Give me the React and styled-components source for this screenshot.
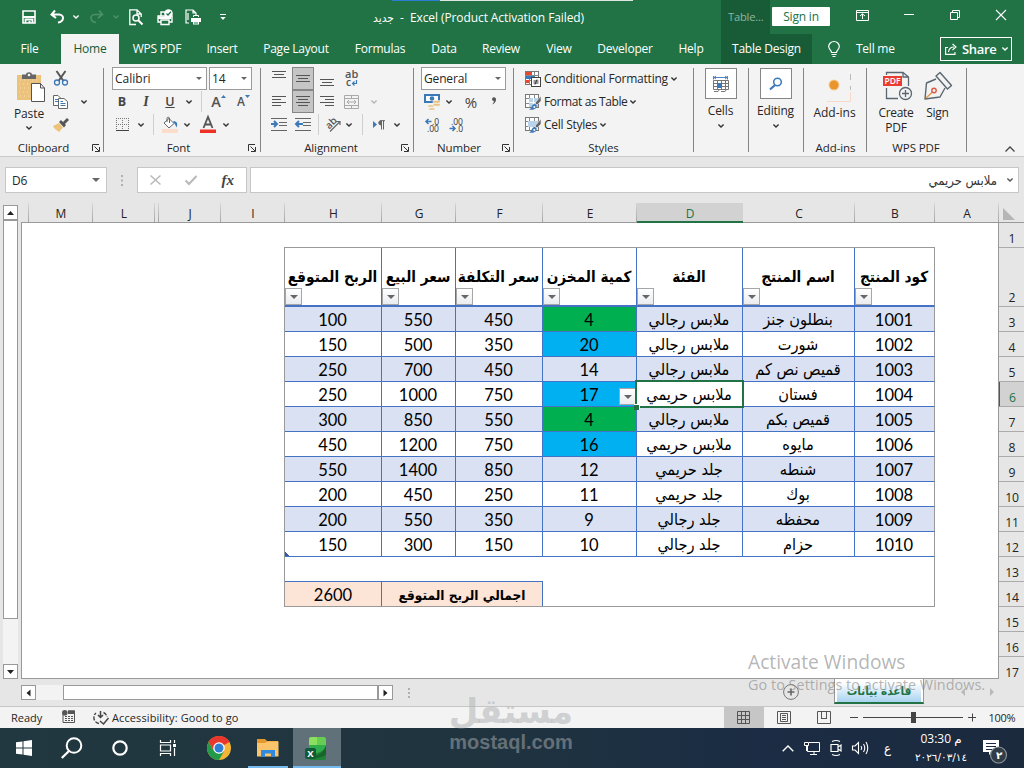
import React from 'react';
import styled, { createGlobalStyle } from 'styled-components';

const ui = "'Open Sans', 'Noto Sans', 'DejaVu Sans Condensed', 'DejaVu Sans', sans-serif";
const arabic = "'DejaVu Sans Condensed', 'DejaVu Sans', sans-serif";
const cellFont = `Lato, ${arabic}`;

const GlobalStyle = createGlobalStyle`
  * {
    box-sizing: border-box;
  }
  body {
    margin: 0;
    overflow: hidden;
  }
`;

const Window = styled.div`
  position: relative;
  display: flex;
  flex-direction: column;
  width: 1024px;
  height: 768px;
  overflow: hidden;
  background: #e6e6e6;
  font-family: ${ui};
  font-size: 12px;
  color: #262626;
  white-space: nowrap;
`;

const Svg = styled.svg`
  display: block;
  flex: none;
  overflow: visible;
`;

const Slot = styled.div`
  display: flex;
  flex: none;
  align-items: center;
  justify-content: center;
  width: ${props => props.$w}px;
  height: ${props => (props.$h ? `${props.$h}px` : 'auto')};
`;

const Text = styled.span`
  letter-spacing: ${props => props.$ls || 0}px;
  font-size: ${props => props.$size || 12}px;
  font-weight: ${props => props.$weight || 400};
  color: ${props => props.$color || 'inherit'};
`;

const SerifItalic = styled.span`
  font-family: 'Liberation Serif', serif;
  font-size: ${props => props.$size}px;
  font-style: italic;
  font-weight: ${props => props.$weight || 400};
  color: #444;
`;

/* title bar */

const TopStrip = styled.div`
  position: absolute;
  top: 0;
  left: 392px;
  width: 241px;
  height: 1px;
  background: linear-gradient(90deg, #2b7cd3 48px, #dfe5e1 48px);
`;

const TitleBar = styled.div`
  display: flex;
  flex: none;
  align-items: center;
  height: 34px;
  background: #217346;
  color: #fff;
`;

const QuickAccess = styled.div`
  display: flex;
  align-items: center;
  width: 373px;
  height: 34px;
  padding-left: 20px;
`;

const FileTitle = styled.div`
  display: flex;
  gap: 6px;
  width: 348px;
  padding-top: 1px;
`;

const ContextTitle = styled.div`
  display: flex;
  align-items: center;
  width: 49px;
  height: 34px;
  padding: 0 0 2px 7px;
  background: #185c37;
  color: #8fb49f;
`;

const SignIn = styled.div`
  display: flex;
  align-items: center;
  justify-content: center;
  width: 58px;
  height: 19px;
  margin-left: 2px;
  margin-top: -1px;
  border-radius: 1px;
  background: #fff;
  color: #217346;
`;

const TabRow = styled.div`
  display: flex;
  flex: none;
  height: 30px;
  background: #217346;
  color: #fff;
`;

const Tab = styled.div`
  display: flex;
  align-items: center;
  justify-content: center;
  width: ${props => props.$w}px;
  height: 30px;
  margin-right: ${props => props.$gap || 0}px;
  padding-bottom: 1px;
  background: ${props => props.$bg || 'transparent'};
  color: ${props => props.$color || '#fff'};
  letter-spacing: -0.22px;
`;

const TellMe = styled.div`
  display: flex;
  align-items: center;
  width: 45px;
  padding: 0 0 1px 0;
`;

const Share = styled.div`
  display: flex;
  align-items: center;
  width: 72px;
  height: 24px;
  margin: 3px 0 0 37px;
  padding: 0 4px;
  gap: 5px;
  border: 1px solid #fff;
`;

/* ribbon */

const Ribbon = styled.div`
  display: flex;
  flex: none;
  height: 93px;
  background: #f3f3f3;
  border-bottom: 1px solid #c9c9c9;
`;

const Group = styled.div`
  display: flex;
  flex: none;
  flex-direction: column;
  width: ${props => props.$w}px;
  height: 89px;
  margin-top: 3px;
  padding-left: ${props => props.$pad || 0}px;
  background: linear-gradient(#858585, #858585) right 1px / 1px 84px no-repeat;
`;

const GroupBody = styled.div`
  display: flex;
  flex: none;
  flex-direction: ${props => (props.$row ? 'row' : 'column')};
  height: 72px;
`;

const GroupFooter = styled.div`
  display: flex;
  flex: none;
  align-items: center;
  height: 17px;
`;

const GroupLabel = styled.div`
  flex: 1;
  text-align: center;
  padding-left: ${props => props.$shift || 0}px;
  font-size: 11.5px;
  letter-spacing: -0.1px;
`;

const ToolRow = styled.div`
  display: flex;
  align-items: center;
  height: 23px;
`;

const Combo = styled.div`
  display: flex;
  align-items: center;
  justify-content: space-between;
  width: ${props => props.$w}px;
  height: 23px;
  margin-right: 2px;
  padding: 0 4px 0 2px;
  border: 1px solid #9a9a9a;
  background: #fff;
`;

const Divider = styled.div`
  width: 1px;
  height: 21px;
  margin: 0 ${props => props.$r || 0}px 0 ${props => props.$l || 0}px;
  background: #cfcfcf;
`;

const Pressed = styled(Slot)`
  border: 1px solid #868686;
  background: #c5c5c5;
`;

const BigButton = styled.div`
  display: flex;
  flex-direction: column;
  align-items: center;
  width: ${props => props.$w}px;
  padding-top: ${props => props.$top || 0}px;
  line-height: 15px;
  text-align: center;
`;

const Framed = styled.div`
  display: flex;
  align-items: center;
  justify-content: center;
  width: 32px;
  height: 31px;
  margin-bottom: 4px;
  border: 1px solid #868686;
  background: #fff;
`;

const StyleRow = styled.div`
  display: flex;
  align-items: center;
  gap: 3px;
  height: 23px;
`;

const Collapse = styled.div`
  display: flex;
  flex: 1;
  align-items: flex-end;
  justify-content: flex-end;
  padding: 0 9px 4px 0;
`;

/* formula bar */

const FormulaBar = styled.div`
  display: flex;
  flex: none;
  height: 46px;
  padding: 10px 5px;
`;

const Field = styled.div`
  display: flex;
  align-items: center;
  justify-content: ${props => props.$justify || 'space-between'};
  width: ${props => props.$w}px;
  height: 26px;
  padding: 0 ${props => props.$pad || 6}px;
  border: 1px solid #c6c6c6;
  background: #fff;
`;

const FormulaText = styled.div`
  margin-right: 9px;
  font-family: ${arabic};
  font-size: 13px;
  color: #333;
`;

/* sheet */

const Workspace = styled.div`
  display: flex;
  flex: none;
  height: 476px;
`;

const VScroll = styled.div`
  display: flex;
  flex-direction: column;
  width: 21px;
  padding: 2px 3px 0;
`;

const ScrollButton = styled.div`
  display: flex;
  flex: none;
  align-items: center;
  justify-content: center;
  width: 15px;
  height: 15px;
  border: 1px solid #999;
  background: #fff;
`;

const ScrollThumb = styled.div`
  flex: none;
  width: ${props => props.$w}px;
  height: ${props => props.$h}px;
  border: 1px solid #999;
  background: #fff;
`;

const ScrollTrack = styled.div`
  flex: ${props => (props.$w ? 'none' : 1)};
  width: ${props => props.$w || 15}px;
  height: 15px;
  min-height: 15px;
  background: #f3f3f3;
`;

const Main = styled.div`
  display: flex;
  flex-direction: column;
  flex: 1;
`;

const ColumnHeads = styled.div`
  display: grid;
  grid-template-columns: 7px 64px 62px 4px 62px 64px 97px 74px 87px 94px 106px 112px 80px 64px 25px;
  height: 20px;
  padding-left: 1px;
  border-bottom: 1px solid #999;
`;

const ColumnHead = styled.div`
  display: flex;
  align-items: center;
  justify-content: center;
  height: ${props => (props.$on ? 20 : 19)}px;
  padding-top: 2px;
  font-family: 'Open Sans', sans-serif;
  font-size: 12px;
  color: ${props => (props.$on ? '#217346' : '#222')};
  background: ${props => (props.$on ? '#d2d2d2' : 'linear-gradient(#d6d6d6, #a5a5a5) right / 1px 100% no-repeat')};
  border-bottom: ${props => (props.$on ? '2px solid #217346' : 'none')};
`;

const Corner = styled.div`
  display: flex;
  align-items: flex-end;
  justify-content: flex-start;
  padding: 0 0 3px 4px;
`;

const SheetRow = styled.div`
  display: flex;
  flex: 1;
`;

const Sheet = styled.div`
  flex: 1;
  padding: 24px 0 0 262px;
  border-left: 1px solid #999;
  border-bottom: 1px solid #999;
  background: #fff;
`;

const RowHeads = styled.div`
  width: 26px;
  height: 456px;
  overflow: hidden;
  border-left: 1px solid #999;
`;

const RowHead = styled.div`
  display: flex;
  align-items: flex-end;
  justify-content: center;
  height: ${props => props.$h}px;
  margin-left: -1px;
  padding-left: 1px;
  line-height: 16px;
  font-size: 12.2px;
  letter-spacing: -0.2px;
  color: ${props => (props.$on ? '#217346' : '#222')};
  background: ${props => (props.$on ? '#d2d2d2' : 'transparent')};
  border-left: ${props => (props.$on ? '2px solid #217346' : '1px solid #999')};
  border-bottom: 1px solid #ababab;
`;

const Table = styled.div`
  position: relative;
  width: 651px;
  border: 1px solid #999;
  border-right: none;
`;

const Row = styled.div`
  display: grid;
  grid-template-columns: 97px 74px 87px 94px 106px 112px 80px;
`;

const HeadCell = styled.div`
  position: relative;
  display: flex;
  align-items: center;
  justify-content: center;
  height: 59px;
  padding: 1px 1px 0 0;
  border-right: 1px solid ${props => (props.$last ? '#999' : '#4472c4')};
  border-bottom: 2px solid #4472c4;
  font-family: ${arabic};
  font-size: 15.2px;
  font-weight: 700;
  color: #000;
`;

const DropButton = styled.div`
  position: absolute;
  left: ${props => props.$x || 0}px;
  top: ${props => props.$y || 40}px;
  display: flex;
  align-items: center;
  justify-content: center;
  width: 17px;
  height: 17px;
  border: 1px solid #a6a6a6;
  background: linear-gradient(#fff, #e9ecf0);
`;

const Cell = styled.div`
  display: flex;
  align-items: center;
  justify-content: center;
  height: 25px;
  padding: ${props => (props.$arabic ? 1 : 2)}px 1px 0 0;
  line-height: 22px;
  border-right: 1px solid ${props => (props.$last ? '#999' : '#4472c4')};
  border-bottom: 1px solid #4472c4;
  background: ${props => props.$bg};
  font-family: ${props => (props.$arabic ? arabic : cellFont)};
  font-size: ${props => (props.$arabic ? 16.2 : 16.5)}px;
  color: #000;
`;

const Blank = styled.div`
  height: 24px;
  border-right: 1px solid #999;
`;

const TotalRow = styled.div`
  display: grid;
  grid-template-columns: 97px 161px 392px;
  height: 25px;
`;

const TotalCell = styled.div`
  display: flex;
  align-items: center;
  justify-content: center;
  height: 25px;
  padding-top: 1px;
  line-height: 22px;
  border-top: 1px solid #4472c4;
  border-right: 1px solid #4472c4;
  background: #fce4d6;
  font-family: ${props => (props.$arabic ? arabic : cellFont)};
  font-size: ${props => (props.$arabic ? 13.6 : 16.5)}px;
  font-weight: ${props => (props.$arabic ? 700 : 400)};
  color: #000;
`;

const TotalRest = styled.div`
  border-right: 1px solid #999;
`;

const Selection = styled.div`
  position: absolute;
  left: 350px;
  top: 132px;
  width: 109px;
  height: 28px;
  border: 2px solid #217346;
`;

const FillHandle = styled.div`
  position: absolute;
  left: 349px;
  top: 156px;
  width: 6px;
  height: 6px;
  border: 1px solid #fff;
  border-width: 1px 1px 0 0;
  background: #217346;
`;

const TableCorner = styled.div`
  position: absolute;
  left: 0;
  top: 304px;
  width: 4px;
  height: 4px;
  background: linear-gradient(45deg, #3559a8 60%, transparent 60%);
`;

/* bottom bars */

const BottomBar = styled.div`
  display: flex;
  flex: none;
  align-items: center;
  height: 27px;
  padding-left: 21px;
`;

const SheetTab = styled.div`
  display: flex;
  flex: none;
  align-items: center;
  justify-content: center;
  width: 90px;
  height: 25px;
  margin: -3px 0 0 35px;
  padding-top: 2px;
  border: solid #999;
  border-width: 0 1px;
  border-bottom: 2px solid #217346;
  background: linear-gradient(#fff 15%, #a9d3f0);
  box-shadow: inset 2px 0 #fff, inset -2px 0 #fff;
  font-family: ${arabic};
  font-size: 11.7px;
  font-weight: 700;
  color: #217346;
`;

const SheetArrows = styled.div`
  flex: none;
  width: 100px;
  padding: 0 0 2px 37px;
`;

const StatusBar = styled.div`
  display: flex;
  flex: none;
  align-items: center;
  height: 22px;
  border-top: 1px solid #c6c6c6;
  background: #f3f3f3;
  font-size: 11px;
`;

const ReadyText = styled.div`
  width: 62px;
  padding-left: 11px;
`;

const AccessText = styled.div`
  width: 612px;
  letter-spacing: 0.1px;
`;

const ViewButton = styled.div`
  display: flex;
  align-items: center;
  justify-content: center;
  width: 40px;
  height: 21px;
  padding: 0 1px 1px 0;
  background: ${props => (props.$on ? '#c6c6c6' : 'transparent')};
`;

const Taskbar = styled.div`
  display: flex;
  flex: none;
  height: 40px;
  background: linear-gradient(90deg, #213840, #20343f 45%, #1b2c44 75%, #1b2a3d);
  color: #fff;
`;

const Task = styled.div`
  display: flex;
  align-items: center;
  justify-content: center;
  width: ${props => props.$w}px;
  height: 40px;
  margin-right: ${props => props.$gap || 0}px;
  background: ${props => (props.$active ? '#61717a' : 'transparent')};
  box-shadow: ${props => (props.$open ? 'inset 0 -2px #76b9ed' : 'none')};
`;

const Clock = styled.div`
  display: flex;
  flex-direction: column;
  align-items: center;
  width: 76px;
  padding-top: 2px;
  line-height: 18px;
`;

const ClockLine = styled.div`
  height: 18px;
  direction: ltr;
  font-family: ${props => (props.$arabic ? "'DejaVu Sans'" : "'Open Sans', 'DejaVu Sans'")}, sans-serif;
  font-size: ${props => (props.$arabic ? 10.5 : 12)}px;
  letter-spacing: ${props => (props.$arabic ? -0.1 : -0.5)}px;
`;

const Activate = styled.div`
  position: absolute;
  left: 748px;
  top: 649px;
  color: rgba(135, 135, 135, 0.62);
`;

const ActivateTitle = styled.div`
  height: 26px;
  line-height: 26px;
  font-size: 19.2px;
`;

const ActivateHint = styled.div`
  height: 20px;
  line-height: 20px;
  font-size: 14.4px;
  letter-spacing: 0.04px;
`;

const Watermark = styled.div`
  position: absolute;
  left: 449px;
  top: 691px;
  width: 124px;
  text-align: center;
  color: rgba(170, 174, 176, 0.5);
  font-family: 'Liberation Sans', 'DejaVu Sans', sans-serif;
  font-weight: 700;
`;

const WatermarkLogo = styled.div`
  height: 40px;
  line-height: 40px;
  font-family: 'DejaVu Sans', sans-serif;
  font-size: 34px;
`;

const WatermarkName = styled.div`
  line-height: 22px;
  font-size: 20px;
`;

const Chevron = ({ color = '#333', w = 6 }) => (
  <Svg width={w} height="4" viewBox="0 0 6 4">
    <path d="M.4 .5L3 3L5.6 .5" fill="none" stroke={color} strokeWidth="1.4" />
  </Svg>
);

const Triangle = ({ color = '#666', w = 6, h = 3, turn = 0 }) => (
  <Svg width={w} height={h} viewBox="0 0 6 4" preserveAspectRatio="none" style={{ transform: `rotate(${turn}deg)` }}>
    <path d="M0 0H6L3 4Z" fill={color} />
  </Svg>
);

const Launcher = () => (
  <Svg width="8" height="8" viewBox="0 0 8 8">
    <path d="M.5 7V.5H7M2.5 2.5L7 7M7.5 3V7.5H3" fill="none" stroke="#333" />
  </Svg>
);

const Lines = ({ rows }) => (
  <Svg width="16" height="16" viewBox="0 0 16 16" shapeRendering="crispEdges">
    {rows.map(([x, y, w], i) => (
      <rect key={i} x={x} y={y} width={w} height="1" fill="#555" />
    ))}
  </Svg>
);

const Indent = ({ flip }) => (
  <Svg width="16" height="14" viewBox="0 0 16 14">
    <path d="M0 .5H16M8 4.5H16M8 7.5H16M0 12.5H16" stroke="#666" />
    <path d={flip ? 'M8 6H1M4 3L1 6L4 9' : 'M0 6H6M3 3L6 6L3 9'} fill="none" stroke="#3c79b8" strokeWidth="2" />
  </Svg>
);

const TableIcon = ({ cond, cell }) => (
  <Svg width="16" height="16" viewBox="0 0 16 16">
    <rect x=".5" y=".5" width="13" height="13" fill="#fff" stroke="#777" />
    <path d="M.5 4.5H13.5M.5 9.5H13.5M4.5 .5V13.5M9.5 .5V13.5" stroke="#888" />
    {cond ? (
      <>
        <path d="M1 1H7V4H1ZM1 9H4V12H1Z" fill="#e5492f" />
        <path d="M1 5H10V8H1Z" fill="#3c79b8" />
        <rect x="6.5" y="6.5" width="9" height="9" fill="#fff" stroke="#444" />
        <path d="M8.5 10H13.5M8.5 12H13.5M12 8.5L10 13.5" stroke="#333" />
      </>
    ) : (
      <>
        <path d={cell ? 'M3 4H13V10H3Z' : 'M4 4H13V13H4Z'} fill="#b9d3ea" />
        {!cell && <path d="M4.5 8.5H13M8.5 4V13" stroke="#fff" />}
        <path d="M16 2L10 9L12 11L16 7Z" fill="#666" stroke="#f3f3f3" strokeWidth=".6" />
        <path d="M4 15.5C7 15 6.5 10 9.5 10C12 10 12.5 13 10.5 14.5C9 15.8 6 16 4 15.5Z" fill="#3c79b8" />
        <circle cx="9.3" cy="13" r="1" fill="#fff" />
      </>
    )}
  </Svg>
);

const columns = ['', 'M', 'L', '', 'J', 'I', 'H', 'G', 'F', 'E', 'D', 'C', 'B', 'A'];

const heads = ['الربح المتوقع', 'سعر البيع', 'سعر التكلفة', 'كمية المخزن', 'الفئة', 'اسم المنتج', 'كود المنتج'];

const GREEN = '#00b050';
const BLUE = '#00b0f0';

const products = [
  [100, 550, 450, 4, 'ملابس رجالي', 'بنطلون جنز', 1001, GREEN],
  [150, 500, 350, 20, 'ملابس رجالي', 'شورت', 1002, BLUE],
  [250, 700, 450, 14, 'ملابس رجالي', 'قميص نص كم', 1003],
  [250, 1000, 750, 17, 'ملابس حريمي', 'فستان', 1004, BLUE],
  [300, 850, 550, 4, 'ملابس رجالي', 'قميص بكم', 1005, GREEN],
  [450, 1200, 750, 16, 'ملابس حريمي', 'مايوه', 1006, BLUE],
  [550, 1400, 850, 12, 'جلد حريمي', 'شنطه', 1007],
  [200, 450, 250, 11, 'جلد حريمي', 'بوك', 1008],
  [200, 550, 350, 9, 'جلد رجالي', 'محفظه', 1009],
  [150, 300, 150, 10, 'جلد رجالي', 'حزام', 1010],
];

const rowHeights = [25, 59, ...Array(15).fill(25)];

const tabs = [
  ['File', 59, 2],
  ['Home', 58, 0, '#f3f3f3', '#185c37'],
  ['WPS PDF', 76],
  ['Insert', 54],
  ['Page Layout', 94],
  ['Formulas', 74],
  ['Data', 54],
  ['Review', 60],
  ['View', 56],
  ['Developer', 76],
  ['Help', 56, 2],
  ['Table Design', 91, 0, '#185c37'],
];

const TitleSection = () => (
  <TitleBar>
    <QuickAccess>
      <Slot $w={18}>
        <Svg width="14" height="14" viewBox="0 0 14 14">
          <path d="M1 1H13V13H1Z" fill="none" stroke="#fff" strokeWidth="1.6" />
          <path d="M1 7H13M3.5 13V9.5H10.500V13" fill="none" stroke="#fff" strokeWidth="1.8" />
          <path d="M6.500 11H8.500V13H6.500Z" fill="#fff" />
        </Svg>
      </Slot>
      <Slot $w={38}>
        <Svg width="15" height="14" viewBox="0 0 15 14">
          <path d="M5 .5L1.5 4.5L6 8M2 4.5H9C15 5 14 11.5 8 12.5" fill="none" stroke="#fff" strokeWidth="2" />
        </Svg>
      </Slot>
      <Slot $w={0}><Chevron color="#fff" /></Slot>
      <Slot $w={40}>
        <Svg width="15" height="14" viewBox="0 0 15 14">
          <path d="M10 .5L13.5 4.5L9 8M13 4.5H6C0 5 1 11.5 7 12.5" fill="none" stroke="#4e9069" strokeWidth="1.6" />
        </Svg>
      </Slot>
      <Slot $w={0}><Chevron color="#4e9069" /></Slot>
      <Slot $w={41}>
        <Svg width="15" height="16" viewBox="0 0 15 16">
          <path d="M7 15.500H.8V.8H8L12.200 5V8M8 1V5H12" fill="none" stroke="#fff" strokeWidth="1.3" />
          <circle cx="7" cy="9" r="3" fill="none" stroke="#fff" strokeWidth="1.5" />
          <path d="M9 11L13.500 15.500" stroke="#fff" strokeWidth="2" />
        </Svg>
      </Slot>
      <Slot $w={16}>
        <Svg width="16" height="16" viewBox="0 0 16 16">
          <path d="M4 7V3H8M1 7H15V13H12V11H4V13H1ZM4 11V15.500H12V11" fill="none" stroke="#fff" strokeWidth="1.4" />
          <path d="M1 7.500H14V10H1Z" fill="#fff" />
          <circle cx="11.500" cy="4.500" r="4.300" fill="#fff" />
          <path d="M9.500 4.500L11 6L14 2.800" fill="none" stroke="#217346" strokeWidth="1.3" />
        </Svg>
      </Slot>
      <Slot $w={41}>
        <Svg width="17" height="16" viewBox="0 0 17 16">
          <path d="M4 14H1V1H8L11 4V6M8 1V4H11M3 4V11" fill="none" stroke="#fff" strokeWidth="1.2" />
          <path d="M6 9H16V13H14V15.500H8V13H6Z" fill="#fff" />
          <path d="M8.500 8V6.500H13.500V8M9.500 13H12.500" fill="none" stroke="#fff" />
          <path d="M9 14H13" stroke="#217346" />
        </Svg>
      </Slot>
      <Slot $w={17}>
        <Svg width="6" height="7" viewBox="0 0 6 7">
          <path d="M0 .5H6" stroke="#fff" />
          <path d="M.3 3H5.700L3 6Z" fill="#fff" />
        </Svg>
      </Slot>
    </QuickAccess>
    <FileTitle>
      <Text $size={12}>جديد</Text>
      <Text>-</Text>
      <Text $ls={-0.09}>Excel (Product Activation Failed)</Text>
    </FileTitle>
    <ContextTitle><Text $size={11.2} $ls={-0.2}>Table...</Text></ContextTitle>
    <SignIn><Text $ls={-0.2}>Sign in</Text></SignIn>
    <Slot $w={65}>
      <Svg width="13" height="11" viewBox="0 0 13 11" style={{ marginTop: -3 }}>
        <path d="M.5 .5H12.500V10.500H.5ZM.5 2.500H12.500M6.500 9V4M4 6L6.500 3.800L9 6" fill="none" stroke="#fff" />
      </Svg>
    </Slot>
    <Slot $w={28}>
      <Svg width="10" height="2" style={{ marginTop: -4 }}><path d="M0 .5H10" stroke="#fff" /></Svg>
    </Slot>
    <Slot $w={64}>
      <Svg width="10" height="10" viewBox="0 0 10 10" style={{ marginTop: -4 }}>
        <path d="M.5 2.500H7.500V9.500H.5ZM2.500 2V.5H9.500V7.500H8" fill="none" stroke="#fff" />
      </Svg>
    </Slot>
    <Slot $w={28}>
      <Svg width="10" height="10" viewBox="0 0 10 10" style={{ marginTop: -4 }}><path d="M0 0L10 10M10 0L0 10" stroke="#fff" strokeWidth="1.1" /></Svg>
    </Slot>
  </TitleBar>
);

const FontGroup = () => (
  <Group $w={157} $pad={8}>
    <GroupBody>
      <ToolRow>
        <Combo $w={95}><Text>Calibri</Text><Triangle /></Combo>
        <Combo $w={43}><Text>14</Text><Triangle /></Combo>
      </ToolRow>
      <ToolRow>
        <Slot $w={20}><Text $weight={700} $size={12.5} $color="#444">B</Text></Slot>
        <Slot $w={28}><SerifItalic $size={14} $weight={700}>I</SerifItalic></Slot>
        <Slot $w={20}><Text $weight={600} $size={12.5} $color="#444" style={{ textDecoration: 'underline' }}>U</Text></Slot>
        <Slot $w={17}><Chevron /></Slot>
        <Divider $l={4} $r={5} />
        <Slot $w={23}>
          <Text $weight={600} $size={14.5} $color="#555">A</Text>
          <Svg width="5" height="14" viewBox="0 0 5 14"><path d="M0 3H5L2.500 0Z" fill="#3c79b8" /></Svg>
        </Slot>
        <Slot $w={27}>
          <Text $weight={600} $size={12} $color="#555">A</Text>
          <Svg width="5" height="14" viewBox="0 0 5 14"><path d="M0 0H5L2.500 3Z" fill="#3c79b8" /></Svg>
        </Slot>
      </ToolRow>
      <ToolRow>
        <Slot $w={20}>
          <Svg width="13" height="13" viewBox="0 0 13 13">
            <path d="M0 .5H13M0 6.500H13M.5 0V12M6.500 0V12M12.500 0V12" stroke="#777" strokeDasharray="1 1" />
            <path d="M0 12.500H13" stroke="#444" />
          </Svg>
        </Slot>
        <Slot $w={17}><Chevron /></Slot>
        <Divider $l={4} $r={7} />
        <Slot $w={17}>
          <Svg width="16" height="16" viewBox="0 0 16 16">
            <path d="M2 6L7 1.500L12 6.500L7 11ZM5 5V1C5 0 7.500 0 7.500 1V6" fill="#fff" stroke="#666" />
            <path d="M12 4C16 5 15.500 8 14.500 10.500C13.500 8.500 13 6.500 11 5Z" fill="#3c79b8" />
            <path d="M0 12H16V16H0Z" fill="#fcdccb" />
          </Svg>
        </Slot>
        <Slot $w={17}><Chevron /></Slot>
        <Slot $w={26}>
          <Svg width="16" height="16" viewBox="0 0 16 16">
            <path d="M3.500 11L8 0L12.500 11M5 7.500H11" fill="none" stroke="#555" strokeWidth="1.8" />
            <path d="M0 12.500H16V16H0Z" fill="#ee3124" />
          </Svg>
        </Slot>
        <Slot $w={9}><Chevron /></Slot>
      </ToolRow>
    </GroupBody>
    <GroupFooter>
      <GroupLabel $shift={2}>Font</GroupLabel>
      <Slot $w={18}><Launcher /></Slot>
    </GroupFooter>
  </Group>
);

const AlignmentGroup = () => (
  <Group $w={153} $pad={5}>
    <GroupBody>
      <ToolRow>
        <Slot $w={26}><Lines rows={[[1, 0, 14], [3, 3, 10], [1, 6, 14]]} /></Slot>
        <Pressed $w={22} $h={23}><Lines rows={[[1, 4, 14], [3, 7, 10], [1, 10, 14]]} /></Pressed>
        <Slot $w={26}><Lines rows={[[1, 8, 14], [3, 11, 10], [1, 14, 14]]} /></Slot>
        <Slot $w={24}>
          <Svg width="14" height="16" viewBox="0 0 14 16">
            <text x="0" y="7" fontSize="11" fontWeight="600" fill="#555" fontFamily="Open Sans">ab</text>
            <text x="1" y="15" fontSize="10" fontWeight="600" fill="#555" fontFamily="Open Sans">c</text>
            <path d="M11.500 9V12.500H8M9.500 10.500L7.500 12.500L9.500 14.500" fill="none" stroke="#3c79b8" strokeWidth="1.2" />
          </Svg>
        </Slot>
      </ToolRow>
      <ToolRow>
        <Slot $w={26}><Lines rows={[[1, 2, 14], [1, 5, 9], [1, 8, 14], [1, 11, 9]]} /></Slot>
        <Pressed $w={22} $h={23}><Lines rows={[[1, 2, 14], [3, 5, 10], [1, 8, 14], [3, 11, 10]]} /></Pressed>
        <Slot $w={26}><Lines rows={[[1, 2, 14], [6, 5, 9], [1, 8, 14], [6, 11, 9]]} /></Slot>
        <Slot $w={23}>
          <Svg width="15" height="14" viewBox="0 0 15 14">
            <path d="M.5 .5H14.500V13.500H.5ZM.5 3.500H14.500M.5 10.500H14.500M7.500 .5V3.500M7.500 10.500V13.500M3 7H12M5 5L3 7L5 9M10 5L12 7L10 9" fill="none" stroke="#aaa" />
          </Svg>
        </Slot>
        <Slot $w={22}><Chevron color="#b5b5b5" /></Slot>
      </ToolRow>
      <ToolRow>
        <Slot $w={26}><Indent /></Slot>
        <Slot $w={22}><Indent flip /></Slot>
        <Divider $l={4} $r={7} />
        <Slot $w={16}>
          <Svg width="16" height="16" viewBox="0 0 16 16">
            <text x="0" y="9" fontSize="10" fontWeight="600" fill="#555" fontFamily="Open Sans" transform="rotate(-45 6 7)">ab</text>
            <path d="M4 14.500L14 4.500M10 4.500H14V8" fill="none" stroke="#666" strokeWidth="1.2" />
          </Svg>
        </Slot>
        <Slot $w={14}><Chevron /></Slot>
        <Divider $l={6} $r={9} />
        <Slot $w={15}>
          <Svg width="13" height="10" viewBox="0 0 13 10">
            <path d="M0 1L4 4.500L0 8Z" fill="#3c79b8" />
            <path d="M8 .5C5 .5 5 5 8 5Z" fill="#666" />
            <path d="M12 .7H8C5 .7 5 5 8 5M8.500 .5V9.500M10.500 .5V9.500" fill="none" stroke="#666" />
          </Svg>
        </Slot>
        <Slot $w={20}><Chevron /></Slot>
      </ToolRow>
    </GroupBody>
    <GroupFooter>
      <GroupLabel $shift={-8}>Alignment</GroupLabel>
      <Slot $w={18}><Launcher /></Slot>
    </GroupFooter>
  </Group>
);

const NumberGroup = () => (
  <Group $w={100} $pad={7}>
    <GroupBody>
      <ToolRow>
        <Combo $w={85}><Text $ls={-0.15}>General</Text><Triangle /></Combo>
      </ToolRow>
      <ToolRow>
        <Slot $w={22}>
          <Svg width="17" height="16" viewBox="0 0 17 16">
            <path d="M0 0H16V9H0Z" fill="#3c79b8" />
            <path d="M2 2H14V7H2Z" fill="#fff" />
            <circle cx="8" cy="4.500" r="2.300" fill="#3c79b8" />
            <path d="M9 6.500H16V9H9ZM9 9.500H16V12H9ZM4 11H10V13H4ZM5 14H10.500V16H5Z" fill="#e9c37d" stroke="#f3f3f3" strokeWidth=".5" />
          </Svg>
        </Slot>
        <Slot $w={12}><Chevron /></Slot>
        <Slot $w={32}><Text $size={15} $color="#444">%</Text></Slot>
        <Slot $w={14}>
          <Svg width="6" height="8" viewBox="0 0 6 8" style={{ marginTop: -2 }}><path d="M1 2A2 2 0 1 1 5 2.500C5 5 3.500 6.500 1 7.500C2.500 6 3 5 2.800 4C1.700 4 1 3 1 2Z" fill="#555" /></Svg>
        </Slot>
      </ToolRow>
      <ToolRow>
        <Slot $w={22}>
          <Svg width="15" height="14" viewBox="0 0 15 14">
            <path d="M6.500 3.500H1M3.500 1L1 3.500L3.500 6" fill="none" stroke="#3c79b8" strokeWidth="1.5" />
            <text x="7" y="6.500" fontSize="8.500" fill="#333" fontFamily="Open Sans">.0</text>
            <text x="2" y="13.500" fontSize="8.500" fill="#333" fontFamily="Open Sans">.00</text>
          </Svg>
        </Slot>
        <Slot $w={26}>
          <Svg width="15" height="14" viewBox="0 0 15 14">
            <path d="M.5 10.500H6M3.500 8L6 10.500L3.500 13" fill="none" stroke="#3c79b8" strokeWidth="1.5" />
            <text x="2" y="6.500" fontSize="8.500" fill="#333" fontFamily="Open Sans">.00</text>
            <text x="7" y="13.500" fontSize="8.500" fill="#333" fontFamily="Open Sans">.0</text>
          </Svg>
        </Slot>
      </ToolRow>
    </GroupBody>
    <GroupFooter>
      <GroupLabel>Number</GroupLabel>
      <Slot $w={17}><Launcher /></Slot>
    </GroupFooter>
  </Group>
);

const RibbonSection = () => (
  <Ribbon>
    <Group $w={104}>
      <GroupBody $row>
        <BigButton $w={58} $top={5}>
          <Svg width="28" height="31" viewBox="0 0 28 31" style={{ marginLeft: 4 }}>
            <path d="M0 3H24V28H0Z" fill="#ebc37c" />
            <path d="M3 8H20M2 12H12M3 16H12M2 20H12M3 24H12" stroke="#f6dfb2" strokeDasharray="1 3" />
            <path d="M5 7V2.500H9C9 -.5 15 -.5 15 2.500H19V7Z" fill="#666" />
            <circle cx="12" cy="3" r="1.300" fill="#f3f3f3" />
            <path d="M14.500 11.500H23.500L27.500 16V29.500H14.500ZM23.500 11.500V16H27.500" fill="#fff" stroke="#555" />
          </Svg>
          <Text $ls={-0.1} style={{ marginTop: 3 }}>Paste</Text>
          <Slot $w={20} $h={14}><Chevron /></Slot>
        </BigButton>
        <div>
          <Slot $w={6} $h={23}>
            <Svg width="14" height="15" viewBox="0 0 14 15">
              <path d="M2.500 0L9.500 10M11.500 0L4.500 10" stroke="#555" strokeWidth="2" />
              <circle cx="3" cy="11.500" r="2.500" fill="none" stroke="#3c79b8" strokeWidth="1.3" />
              <circle cx="11" cy="11.500" r="2.500" fill="none" stroke="#3c79b8" strokeWidth="1.3" />
            </Svg>
          </Slot>
          <ToolRow>
            <Slot $w={5}>
              <Svg width="15" height="14" viewBox="0 0 15 14">
                <path d="M.5 .5H5L7.500 3V10.500H.5Z" fill="#fff" stroke="#666" />
                <path d="M5.500 3.500H11L14.500 6.500V13.500H5.500Z" fill="#fff" stroke="#666" />
                <path d="M2 4.500H5M2 6.500H5M7.500 6.500H10M7.500 8.500H12.500M7.500 10.500H12.500" stroke="#3c79b8" />
              </Svg>
            </Slot>
            <Slot $w={41}><Chevron /></Slot>
          </ToolRow>
          <Slot $w={6} $h={23}>
            <Svg width="16" height="14" viewBox="0 0 16 14">
              <path d="M0 8L6 5L10 9.500L6 14C4 12 1 11 0 8Z" fill="#ebc37c" />
              <path d="M6 4L8 2L13 7L11 9.500ZM10 4L14 0L16 2L12 6Z" fill="#555" />
            </Svg>
          </Slot>
        </div>
      </GroupBody>
      <GroupFooter>
        <GroupLabel>Clipboard</GroupLabel>
        <Slot $w={17}><Launcher /></Slot>
      </GroupFooter>
    </Group>
    <FontGroup />
    <AlignmentGroup />
    <NumberGroup />
    <Group $w={180} $pad={11}>
      <GroupBody>
        <StyleRow><TableIcon cond /><Text $ls={-0.22}>Conditional Formatting</Text><Chevron /></StyleRow>
        <StyleRow><TableIcon /><Text $ls={-0.4}>Format as Table</Text><Chevron /></StyleRow>
        <StyleRow><TableIcon cell /><Text $ls={-0.25}>Cell Styles</Text><Chevron /></StyleRow>
      </GroupBody>
      <GroupFooter><GroupLabel style={{ paddingRight: 12 }}>Styles</GroupLabel></GroupFooter>
    </Group>
    <Group $w={55}>
      <BigButton $w={53} $top={1}>
        <Framed>
          <Svg width="16" height="16" viewBox="0 0 16 16">
            <path d="M1 1.500H14M3 0L1 1.500L3 3M12 0L14 1.500L12 3M.5 0V3.500M14.500 0V3.500" fill="none" stroke="#3c79b8" strokeWidth=".9" />
            <path d="M.5 4.500H15.500V13.500H.5ZM.5 7.500H15.500M.5 10.500H15.500M4.500 4.500V13.500M8.500 4.500V13.500M12.500 4.500V13.500M1 15.500H5L6 14M8 15.500H12L13 14" fill="none" stroke="#777" />
            <path d="M4 7H9V12H4Z" fill="#3c79b8" />
          </Svg>
        </Framed>
        <Text $ls={-0.1}>Cells</Text>
        <Slot $w={20} $h={16}><Chevron /></Slot>
      </BigButton>
    </Group>
    <Group $w={55}>
      <BigButton $w={53} $top={1}>
        <Framed>
          <Svg width="14" height="14" viewBox="0 0 14 14">
            <circle cx="8.500" cy="5" r="3.800" fill="none" stroke="#3c79b8" strokeWidth="1.5" />
            <path d="M6 8L1 12.500" stroke="#3c79b8" strokeWidth="2.2" />
          </Svg>
        </Framed>
        <Text $ls={-0.2}>Editing</Text>
        <Slot $w={20} $h={16}><Chevron /></Slot>
      </BigButton>
    </Group>
    <Group $w={63}>
      <GroupBody $row>
        <BigButton $w={61} $top={5}>
          <Svg width="36" height="30" viewBox="0 0 36 30" style={{ margin: '0 2px 3px 0' }}>
            <circle cx="18" cy="13" r="5.500" fill="#f7cf9a" />
            <circle cx="18" cy="13" r="4.500" fill="#e8952d" />
            <path d="M34.500 2V8M34.500 14V18" stroke="#bbb" />
            <path d="M34.500 20V29.500H11" fill="none" stroke="#f9d9ca" />
          </Svg>
          <Text>Add-ins</Text>
        </BigButton>
      </GroupBody>
      <GroupFooter><GroupLabel>Add-ins</GroupLabel></GroupFooter>
    </Group>
    <Group $w={100} $pad={8}>
      <GroupBody $row>
        <BigButton $w={42} $top={4}>
          <Svg width="30" height="30" viewBox="0 0 30 30" style={{ marginBottom: 4 }}>
            <path d="M5.500 4V1.500H22L27.500 6V15M5.500 17V27.500H17M22 1.500V6H27" fill="none" stroke="#5b6770" strokeWidth="1.3" />
            <path d="M2 5H21V15H2Z" fill="#ea3d2f" />
            <text x="3.500" y="13" fontSize="8.500" fontWeight="600" fill="#fff" fontFamily="Open Sans">PDF</text>
            <circle cx="24.500" cy="22.500" r="6" fill="#f3f3f3" stroke="#5b6770" strokeWidth="1.3" />
            <path d="M24.500 19V26M21 22.500H28" stroke="#5b6770" strokeWidth="1.3" />
          </Svg>
          <Text $ls={-0.3}>Create</Text>
          <Text $ls={-0.2}>PDF</Text>
        </BigButton>
        <BigButton $w={41} $top={4}>
          <Svg width="30" height="30" viewBox="0 0 30 30" style={{ marginBottom: 4 }}>
            <path d="M17 1.500L28.500 14.500L24.500 18L13 5ZM13 8L3.500 12L2 28L17 26L22 17" fill="none" stroke="#5b6770" strokeWidth="1.4" strokeLinejoin="round" />
            <path d="M3 27L9.500 21" stroke="#e59a45" strokeWidth="1.5" />
            <circle cx="11" cy="19.500" r="2.200" fill="none" stroke="#dc5b45" strokeWidth="1.4" />
          </Svg>
          <Text $ls={-0.3}>Sign</Text>
        </BigButton>
      </GroupBody>
      <GroupFooter><GroupLabel style={{ paddingRight: 10 }}>WPS PDF</GroupLabel></GroupFooter>
    </Group>
    <Collapse>
      <Svg width="10" height="6" viewBox="0 0 10 6"><path d="M.5 5.500L5 1L9.500 5.500" fill="none" stroke="#444" strokeWidth="1.3" /></Svg>
    </Collapse>
  </Ribbon>
);

const FormulaSection = () => (
  <FormulaBar>
    <Field $w={102}><Text $ls={-0.1}>D6</Text><Triangle w={8} h={4} /></Field>
    <Slot $w={30} $h={26}>
      <Svg width="2" height="11" viewBox="0 0 2 11"><path d="M0 0H2V2H0ZM0 4.500H2V6.500H0ZM0 9H2V11H0Z" fill="#b0b0b0" /></Svg>
    </Slot>
    <Field $w={110} $pad={12}>
      <Svg width="11" height="10" viewBox="0 0 11 10"><path d="M.5 .5L10.500 9.500M10.500 .5L.5 9.500" stroke="#b9b9b9" strokeWidth="1.5" /></Svg>
      <Svg width="12" height="10" viewBox="0 0 12 10"><path d="M.5 5.500L4 9L11.500 1" fill="none" stroke="#b9b9b9" strokeWidth="2" /></Svg>
      <SerifItalic $size={15} $weight={700}>fx</SerifItalic>
    </Field>
    <Slot $w={3} />
    <Field $w={769} $pad={4} $justify="flex-end">
      <FormulaText dir="rtl">ملابس حريمي</FormulaText>
      <Chevron color="#555" w={8} />
    </Field>
  </FormulaBar>
);

const ProductTable = () => (
  <Table>
    <Row>
      {heads.map((head, i) => (
        <HeadCell key={head} dir="rtl" $last={i === 6}>
          {head}
          <DropButton><Triangle w={8} h={4} /></DropButton>
        </HeadCell>
      ))}
    </Row>
    {products.map((product, r) => (
      <Row key={product[6]}>
        {product.slice(0, 7).map((value, c) => (
          <Cell
            key={c}
            dir="rtl"
            $arabic={typeof value === 'string'}
            $last={c === 6}
            $bg={(c === 3 && product[7]) || (r % 2 ? '#fff' : '#d9e1f2')}
          >
            {value}
          </Cell>
        ))}
      </Row>
    ))}
    <Blank />
    <TotalRow>
      <TotalCell>2600</TotalCell>
      <TotalCell $arabic dir="rtl">اجمالي الربح المتوقع</TotalCell>
      <TotalRest />
    </TotalRow>
    <TableCorner />
    <DropButton $x={334} $y={140}><Triangle w={8} h={4} /></DropButton>
    <Selection />
    <FillHandle />
  </Table>
);

const SheetSection = () => (
  <Workspace>
    <VScroll>
      <ScrollButton><Triangle color="#222" w={7} h={4} turn={180} /></ScrollButton>
      <ScrollThumb $w={15} $h={399} />
      <ScrollTrack />
      <ScrollButton><Triangle color="#222" w={7} h={4} /></ScrollButton>
    </VScroll>
    <Main>
      <ColumnHeads>
        {columns.map((name, i) => (
          <ColumnHead key={i} $on={name === 'D'}>{name}</ColumnHead>
        ))}
        <Corner>
          <Svg width="12" height="12" viewBox="0 0 12 12"><path d="M0 0V12H12Z" fill="#b5b5b5" /></Svg>
        </Corner>
      </ColumnHeads>
      <SheetRow>
        <Sheet><ProductTable /></Sheet>
        <RowHeads>
          {rowHeights.map((h, i) => (
            <RowHead key={i} $h={h} $on={i === 5}>{i + 1}</RowHead>
          ))}
        </RowHeads>
      </SheetRow>
    </Main>
  </Workspace>
);

const BottomSection = () => (
  <BottomBar>
    <ScrollButton><Triangle color="#222" w={7} h={4} turn={90} /></ScrollButton>
    <ScrollTrack $w={27} />
    <ScrollThumb $w={315} $h={15} />
    <ScrollButton><Triangle color="#222" w={7} h={4} turn={-90} /></ScrollButton>
    <Slot $w={32}>
      <Svg width="2" height="10" viewBox="0 0 2 10"><path d="M0 0H2V2H0ZM0 4H2V6H0ZM0 8H2V10H0Z" fill="#b0b0b0" /></Svg>
    </Slot>
    <Slot $w={358} />
    <Svg width="16" height="16" viewBox="0 0 16 16" style={{ marginTop: -2 }}>
      <circle cx="8" cy="8" r="7.400" fill="none" stroke="#777" />
      <path d="M8 4.500V11.500M4.500 8H11.500" stroke="#666" strokeWidth="1.6" />
    </Svg>
    <SheetTab dir="rtl">قاعدة بيانات</SheetTab>
    <SheetArrows>
      <Svg width="34" height="8" viewBox="0 0 34 8"><path d="M4 0V8L0 4ZM29 0V8L33 4Z" fill="#b9b9b9" /></Svg>
    </SheetArrows>
  </BottomBar>
);

const StatusSection = () => (
  <StatusBar>
    <ReadyText>Ready</ReadyText>
    <Slot $w={13}>
      <Svg width="13" height="13" viewBox="0 0 13 13" style={{ marginTop: -2 }}>
        <path d="M1 4V12.500H12.500V1H6M3 6.500H11M3 8.500H11M3 10.500H11" fill="none" stroke="#555" />
        <path d="M6 .5H13V4H6Z" fill="#555" />
        <circle cx="2.800" cy="2.800" r="2.800" fill="#555" />
        <path d="M5.500 5V12M8.500 5V12" stroke="#f3f3f3" />
      </Svg>
    </Slot>
    <Slot $w={37}>
      <Svg width="16" height="14" viewBox="0 0 16 14" style={{ marginLeft: 14 }}>
        <path d="M6 12.500A6 6 0 0 1 3 2M10.500 1.500A6 6 0 0 1 14 6" fill="none" stroke="#444" strokeWidth="1.4" strokeDasharray="4 1.500" />
        <path d="M7.500 0V6M5 4L7.500 6.500L10 4M7 10L10.500 13L15.500 7" fill="none" stroke="#444" strokeWidth="1.5" />
      </Svg>
    </Slot>
    <AccessText>Accessibility: Good to go</AccessText>
    <ViewButton $on>
      <Svg width="13" height="13" viewBox="0 0 13 13"><path d="M.5 .5H12.500V12.500H.5ZM.5 4.500H12.500M.5 8.500H12.500M4.500 .5V12.500M8.500 .5V12.500" fill="none" stroke="#555" /></Svg>
    </ViewButton>
    <ViewButton>
      <Svg width="14" height="13" viewBox="0 0 14 13"><path d="M.5 .5H13.500V12.500H.5ZM3.500 2.500H10.500V10.500H3.500ZM5 4.500H9M5 6.500H9M5 8.500H9" fill="none" stroke="#555" /></Svg>
    </ViewButton>
    <ViewButton>
      <Svg width="14" height="13" viewBox="0 0 14 13"><path d="M.5 .5H13.500V12.500H.5ZM4.500 .5V7.500M9.500 .5V7.500M4 7.500H10" fill="none" stroke="#555" /></Svg>
    </ViewButton>
    <Svg width="134" height="12" viewBox="0 0 134 12" style={{ margin: '-2px 0 0 4px' }}>
      <path d="M2 6.500H10M15 6.500H115M120 6.500H128M124.500 2.500V10.500" stroke="#444" />
      <path d="M63 1H68V12H63Z" fill="#444" />
    </Svg>
    <Slot $w={40}><Text $size={11} $ls={-0.3}>100%</Text></Slot>
  </StatusBar>
);

const TaskbarSection = () => (
  <Taskbar>
    <Task $w={48}>
      <Svg width="16" height="16" viewBox="0 0 16 16"><path d="M0 2.300L6.500 1.400V7.500H0ZM7.500 1.200L16 0V7.500H7.500ZM0 8.500H6.500V14.600L0 13.700ZM7.500 8.500H16V16L7.500 14.800Z" fill="#fff" /></Svg>
    </Task>
    <Task $w={48}>
      <Svg width="22" height="22" viewBox="0 0 22 22">
        <circle cx="13" cy="8.500" r="7.300" fill="none" stroke="#fff" strokeWidth="2" />
        <path d="M8 14L.8 21" stroke="#fff" strokeWidth="2.3" />
      </Svg>
    </Task>
    <Task $w={48}>
      <Svg width="16" height="16" viewBox="0 0 16 16"><circle cx="8" cy="8" r="6.700" fill="none" stroke="#fff" strokeWidth="2.2" /></Svg>
    </Task>
    <Task $w={48} $gap={3}>
      <Svg width="16" height="16" viewBox="0 0 16 16">
        <path d="M.5 0V2.500H10.500V0M.5 5H10.500V11H.5ZM.5 16V13.500H10.500V16M14.500 0V3M14.500 8V16" fill="none" stroke="#fff" strokeWidth="1.2" />
        <path d="M13 4H16V7H13Z" fill="#fff" />
      </Svg>
    </Task>
    <Task $w={48} $gap={5}>
      <Svg width="24" height="24" viewBox="0 0 24 24">
        <circle cx="12" cy="12" r="12" fill="#f4b437" />
        <path d="M12 12L1.600 6A12 12 0 0 1 22.400 6Z" fill="#e8382d" />
        <path d="M12 6H22.400A12 12 0 0 0 1.600 6L6.800 15Z" fill="#e8382d" />
        <path d="M1.600 6A12 12 0 0 0 12 24L17.200 15L6.800 15Z" fill="#239a4a" />
        <circle cx="12" cy="12" r="5.800" fill="#fff" />
        <circle cx="12" cy="12" r="4.500" fill="#307fd7" />
      </Svg>
    </Task>
    <Task $w={40} $gap={5} $open>
      <Svg width="22" height="18" viewBox="0 0 22 18">
        <path d="M0 0H8L10 2H21V17H0Z" fill="#e6982c" />
        <path d="M0 4H8L10 2.500H21.500V17.500H0Z" fill="#fcc46a" />
        <path d="M4 18V11H18V18H14V14.500H8V18Z" fill="#308be0" />
      </Svg>
    </Task>
    <Task $w={48} $active $open>
      <Svg width="22" height="23" viewBox="0 0 22 23" style={{ marginLeft: -3 }}>
        <rect x="4" width="17" height="23" rx="2" fill="#1f8236" />
        <path d="M6 0H12V8H4V2Q4 0 6 0Z" fill="#8be05f" />
        <path d="M12 0H19Q21 0 21 2V9H12Z" fill="#66cc52" />
        <path d="M4 8H21Q20 14 12 16L4 18Z" fill="#2fae4b" />
        <path d="M21 9V18Q12 23 6 20Q18 18 21 9Z" fill="#17652c" />
        <rect y="11" width="11" height="11" rx="2" fill="#0f5a3b" />
        <text x="2.300" y="19.800" fontSize="9.500" fontWeight="700" fill="#fff" fontFamily="Open Sans">X</text>
      </Svg>
    </Task>
    <Slot $w={434} />
    <Slot $w={25} $h={40}>
      <Svg width="12" height="7" viewBox="0 0 12 7"><path d="M.7 6.300L6 1L11.300 6.300" fill="none" stroke="#fff" strokeWidth="1.4" /></Svg>
    </Slot>
    <Slot $w={24} $h={40}>
      <Svg width="16" height="13" viewBox="0 0 16 13"><path d="M3.500 4V9.500H15.500V.5H5M10 9.500V12.500M6 12.500H13M.5 .5H4.500V3.500H.5ZM2.500 4V9" fill="none" stroke="#fff" /></Svg>
    </Slot>
    <Slot $w={24} $h={40}>
      <Svg width="12" height="16" viewBox="0 0 12 16"><path d="M1 4.500H8V11.500H1ZM8 7L11 5V11L8 9M2 1.500Q6 -.5 10 1.500M2 14.500Q6 16.500 10 14.500" fill="none" stroke="#fff" strokeWidth="1.2" /></Svg>
    </Slot>
    <Slot $w={24} $h={40}>
      <Svg width="17" height="14" viewBox="0 0 17 14"><path d="M.5 5H3L6.500 1.500V12.500L3 9H.5ZM9 5Q10.500 7 9 9M11.500 3Q14 7 11.500 11M14 1Q17.500 7 14 13" fill="none" stroke="#fff" strokeWidth="1.1" /></Svg>
    </Slot>
    <Slot $w={31} $h={40}><Text $size={13}>ع</Text></Slot>
    <Clock>
      <ClockLine>03:30 <bdi>م</bdi></ClockLine>
      <ClockLine $arabic>٢٠٢٦/٠٣/١٤</ClockLine>
    </Clock>
    <Slot $w={35} $h={40}>
      <Svg width="24" height="24" viewBox="0 0 24 24" style={{ margin: '8px 4px 0 0' }}>
        <path d="M0 0H16V12H9L6 15V12H0Z" fill="#fff" />
        <path d="M3 3.500H13M3 6.500H13M3 9.500H9" stroke="#1b2c44" />
        <circle cx="15.500" cy="15" r="8" fill="#323c47" stroke="#8b9399" strokeWidth="1.2" />
        <text x="13" y="19" fontSize="10.500" fontWeight="700" fill="#fff" fontFamily="DejaVu Sans">٢</text>
      </Svg>
    </Slot>
  </Taskbar>
);

const App = () => {
  return (
    <>
      <GlobalStyle />
      <Window>
        <TitleSection />
        <TabRow>
          {tabs.map(([name, w, gap, bg, color]) => (
            <Tab key={name} $w={w} $gap={gap} $bg={bg} $color={color}>{name}</Tab>
          ))}
          <Slot $w={44}>
            <Svg width="12" height="16" viewBox="0 0 12 16">
              <path d="M3.500 11.500C3.500 9 .7 8.500 .7 5.500A5.300 5 0 0 1 11.300 5.500C11.300 8.500 8.500 9 8.500 11.500ZM3.500 13.500H8.500M4.500 15.500H7.500" fill="none" stroke="#fff" strokeWidth="1.2" />
            </Svg>
          </Slot>
          <TellMe><Text $ls={-0.25}>Tell me</Text></TellMe>
          <Slot $w={2} />
          <Share>
            <Svg width="12" height="12" viewBox="0 0 12 12">
              <path d="M3 4.500H.6V11.400H10V9M3.500 9C4 5.500 6 4 9 4M7.500 1L11 4L7.500 7" fill="none" stroke="#fff" strokeWidth="1.1" />
            </Svg>
            <Text $size={13} $weight={600} $ls={-0.3}>Share</Text>
            <Chevron color="#fff" />
          </Share>
        </TabRow>
        <RibbonSection />
        <FormulaSection />
        <SheetSection />
        <BottomSection />
        <StatusSection />
        <TaskbarSection />
        <TopStrip />
        <Activate>
          <ActivateTitle>Activate Windows</ActivateTitle>
          <ActivateHint>Go to Settings to activate Windows.</ActivateHint>
        </Activate>
        <Watermark>
          <WatermarkLogo dir="rtl">مستقل</WatermarkLogo>
          <WatermarkName>mostaql.com</WatermarkName>
        </Watermark>
      </Window>
    </>
  );
};

export default App;
